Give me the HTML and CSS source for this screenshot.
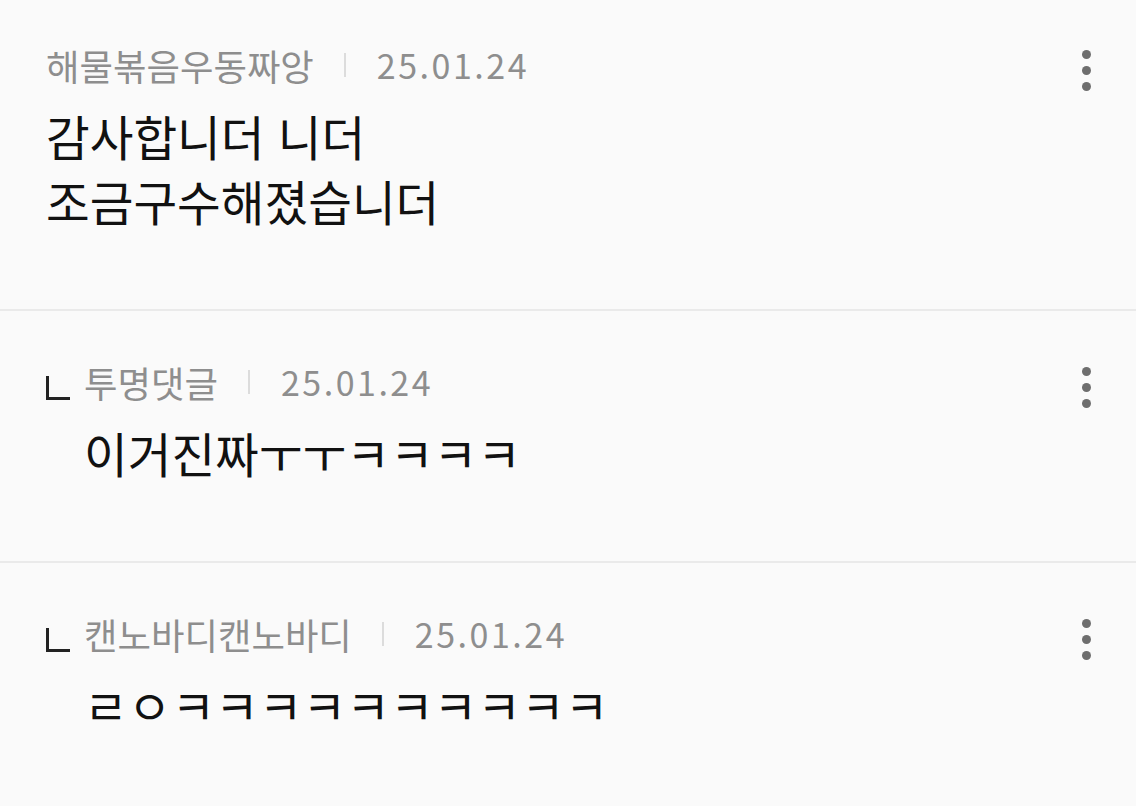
FILE: index.html
```html
<!DOCTYPE html>
<html lang="ko">
<head>
  <meta charset="UTF-8" />
  <meta name="viewport" content="width=device-width, initial-scale=1" />
  <title>댓글</title>
  <link rel="stylesheet" href="styles.css">
</head>
<body>
  <ul class="comment-list">
    <li class="comment">
      <div class="comment-head">
        <span class="nickname">해물볶음우동짜앙</span>
        <span class="divider" aria-hidden="true"></span>
        <span class="date">25.01.24</span>
        <button class="more" aria-label="더보기"><i></i><i></i><i></i></button>
      </div>
      <p class="comment-body">감사합니더 니더<br>조금구수해졌습니더</p>
    </li>

    <li class="comment reply">
      <div class="comment-head">
        <span class="reply-mark" aria-hidden="true"></span>
        <span class="nickname">투명댓글</span>
        <span class="divider" aria-hidden="true"></span>
        <span class="date">25.01.24</span>
        <button class="more" aria-label="더보기"><i></i><i></i><i></i></button>
      </div>
      <p class="comment-body">이거진짜ㅜㅜㅋㅋㅋㅋ</p>
    </li>

    <li class="comment reply">
      <div class="comment-head">
        <span class="reply-mark" aria-hidden="true"></span>
        <span class="nickname">캔노바디캔노바디</span>
        <span class="divider" aria-hidden="true"></span>
        <span class="date">25.01.24</span>
        <button class="more" aria-label="더보기"><i></i><i></i><i></i></button>
      </div>
      <p class="comment-body">ㄹㅇㅋㅋㅋㅋㅋㅋㅋㅋㅋㅋ</p>
    </li>
  </ul>
</body>
</html>
```

FILE: styles.css
```css
body {
  margin: 0;
  background: #fafafa;
  font-family: "Noto Sans CJK KR", "Noto Sans", sans-serif;
  color: #111;
  overflow: hidden;
}
.comment-list {
  list-style: none;
  margin: -6px 0 0;
  padding: 0;
}
.comment {
  padding: 51px 45px 76px 46px;
  border-bottom: 2px solid #eaeaea;
}
.comment-head {
  display: flex;
  align-items: center;
  height: 40px;
}
.reply-mark {
  width: 21px;
  height: 21px;
  border-left: 3px solid #222;
  border-bottom: 3px solid #222;
  margin: 12px 14px 0 0;
}
.nickname {
  font-size: 36.4px;
  color: #8e8e8e;
  line-height: 40px;
}
.divider {
  width: 2px;
  height: 24px;
  background: #dcdcdc;
  margin: 0 31px 0 30px;
}
.date {
  font-size: 34px;
  color: #8e8e8e;
  line-height: 40px;
  letter-spacing: 2.5px;
}
.more {
  margin-left: auto;
  margin-top: 11px;
  padding: 0;
  border: none;
  background: none;
  width: 10px;
  display: flex;
  flex-direction: column;
  align-items: center;
  gap: 7px;
}
.more i {
  width: 9px;
  height: 9px;
  border-radius: 50%;
  background: #6e6e6e;
}
.comment-body {
  margin: 18px 0 0;
  font-size: 47.5px;
  line-height: 65px;
}
.reply .comment-body {
  padding-left: 38px;
}
```
